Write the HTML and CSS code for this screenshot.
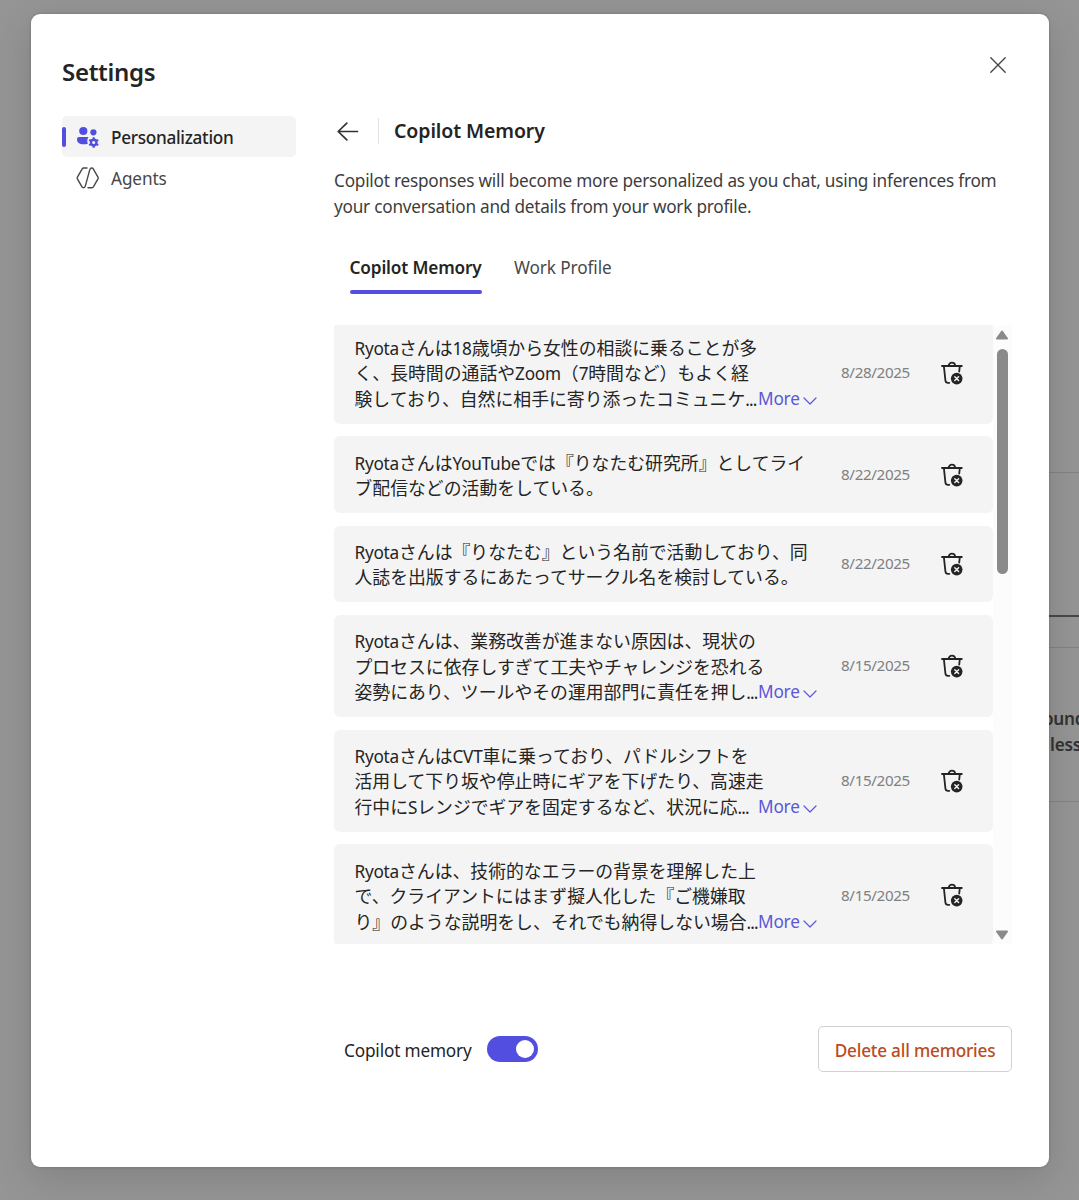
FILE: index.html
```
<!DOCTYPE html>
<html lang="en">

<head>
    <meta charset="UTF-8">
    <meta name="viewport" content="width=device-width, initial-scale=1.0">
    <title>Settings - Copilot Memory</title>
    <link rel="stylesheet" href="styles.css">
</head>

<body>
    <!-- Dimmed page behind the dialog -->
    <div class="page-behind">
        <div class="behind-box"></div>
        <div class="behind-card">
            <p>ound</p>
            <p>less</p>
        </div>
    </div>

    <!-- Shared icons -->
    <svg class="icon-defs" width="0" height="0">
        <symbol id="icon-trash" viewBox="0 0 24 26">
            <path d="M2 6h19.800M8.700 5.800a3.200 3.200 0 0 1 6.400 0M3.900 6.300l1.500 14c.2 1.700 1 2.500 2.600 2.500h1.300M19.800 6.300l-.6 5.400" fill="none" stroke="#242424" stroke-width="1.800" stroke-linecap="round" />
            <circle cx="16.700" cy="18.600" r="5.800" fill="#242424" />
            <path d="M14.800 16.700l3.800 3.800M18.600 16.700l-3.800 3.800" stroke="#f4f4f4" stroke-width="1.400" stroke-linecap="round" />
        </symbol>
        <symbol id="icon-chevron" viewBox="0 0 14 8">
            <path d="M1 1l6 6 6-6" fill="none" stroke="#5b57d8" stroke-width="1.2" stroke-linecap="round" stroke-linejoin="round" />
        </symbol>
    </svg>

    <div class="modal">
        <!-- Sidebar -->
        <div class="sidebar">
            <h1 class="title">Settings</h1>
            <div class="nav-item active">
                <span class="nav-bar"></span>
                <svg class="nav-icon" width="24" height="24" viewBox="0 0 24 24">
                    <g fill="#524fe0">
                        <circle cx="7.3" cy="6" r="4.1" />
                        <circle cx="17.4" cy="7.3" r="3.1" />
                        <path d="M3 12h9.6c-1 1.4-1.5 3-1.3 4.7.1.8.3 1.4.6 2-1.3.4-2.8.5-4.3.5C3.3 19.2 1 17.4 1 14.2 1 12.9 1.8 12 3 12z" />
                        <circle cx="17.7" cy="17.5" r="3.9" />
                        <path d="M17.7 12.3v10.4M13.2 14.9l9 5.2M13.2 20.1l9-5.2" stroke="#524fe0" stroke-width="2.2" />
                    </g>
                    <circle cx="17.7" cy="17.5" r="1.5" fill="#f4f4f4" />
                </svg>
                <span class="nav-label">Personalization</span>
            </div>
            <div class="nav-item">
                <span class="nav-bar"></span>
                <svg class="nav-icon" width="24" height="24" viewBox="0 0 24 24">
                    <path d="M11 2H7.5c-.5 0-1 .3-1.3.8L1.3 11.3c-.2.4-.2.9 0 1.3l4.5 8c.4.7 1 1.1 1.700 1.100 1 0 1.500-.600 1.800-1.600L13.800 3.600c.3-1 .9-1.600 1.900-1.600.8 0 1.300.4 1.700 1.100l4.700 8.200c.2.4.2.9 0 1.300l-4.700 8.300c-.3.500-.8.800-1.400.8H12" fill="none" stroke="#484848" stroke-width="1.4" stroke-linecap="round" />
                </svg>
                <span class="nav-label">Agents</span>
            </div>
        </div>

        <!-- Main content -->
        <div class="content">
            <div class="close-row">
                <svg width="16" height="16" viewBox="0 0 16 16">
                    <path d="M.8.8l14.4 14.4M15.2.8L.8 15.2" stroke="#424242" stroke-width="1.3" stroke-linecap="round" />
                </svg>
            </div>
            <div class="content-header">
                <svg width="22" height="20" viewBox="0 0 22 20">
                    <path d="M1.2 10.5H20.5M9.8 2.1L1.2 10.5l8.6 8.4" fill="none" stroke="#333" stroke-width="1.7" stroke-linecap="round" stroke-linejoin="round" />
                </svg>
                <h2 class="content-title">Copilot Memory</h2>
            </div>
            <p class="description">Copilot responses will become more personalized as you chat, using inferences from<br>your conversation and details from your work profile.</p>

            <div class="tabs">
                <span class="tab selected">Copilot Memory</span>
                <span class="tab">Work Profile</span>
            </div>

            <div class="memory-area">
                <div class="memory-list">
                    <div class="memory first">
                        <div class="memory-text">
                            <p class="clamped" lang="ja"><span class="latin">Ryota</span>さんは<span class="latin">18</span>歳頃から女性の相談に乗ることが多<br>く、長時間の通話や<span class="latin">Zoom</span>（<span class="latin">7</span>時間など）もよく経<br>験しており、自然に相手に寄り添ったコミュニケ<span class="dots">...</span></p>
                            <span class="more">More<svg width="14" height="8"><use href="#icon-chevron" /></svg></span>
                        </div>
                        <span class="date">8/28/2025</span>
                        <svg class="trash" width="24" height="26"><use href="#icon-trash" /></svg>
                    </div>
                    <div class="memory">
                        <div class="memory-text">
                            <p lang="ja"><span class="latin">Ryota</span>さんは<span class="latin">YouTube</span>では『りなたむ研究所』としてライ<br>ブ配信などの活動をしている。</p>
                        </div>
                        <span class="date">8/22/2025</span>
                        <svg class="trash" width="24" height="26"><use href="#icon-trash" /></svg>
                    </div>
                    <div class="memory">
                        <div class="memory-text">
                            <p lang="ja"><span class="latin">Ryota</span>さんは『りなたむ』という名前で活動しており、同<br>人誌を出版するにあたってサークル名を検討している。</p>
                        </div>
                        <span class="date">8/22/2025</span>
                        <svg class="trash" width="24" height="26"><use href="#icon-trash" /></svg>
                    </div>
                    <div class="memory">
                        <div class="memory-text">
                            <p class="clamped" lang="ja"><span class="latin">Ryota</span>さんは、業務改善が進まない原因は、現状の<br>プロセスに依存しすぎて工夫やチャレンジを恐れる<br>姿勢にあり、ツールやその運用部門に責任を押し<span class="dots">...</span></p>
                            <span class="more">More<svg width="14" height="8"><use href="#icon-chevron" /></svg></span>
                        </div>
                        <span class="date">8/15/2025</span>
                        <svg class="trash" width="24" height="26"><use href="#icon-trash" /></svg>
                    </div>
                    <div class="memory">
                        <div class="memory-text">
                            <p class="clamped" lang="ja"><span class="latin">Ryota</span>さんは<span class="latin">CVT</span>車に乗っており、パドルシフトを<br>活用して下り坂や停止時にギアを下げたり、高速走<br>行中に<span class="latin">S</span>レンジでギアを固定するなど、状況に応<span class="dots">...</span></p>
                            <span class="more">More<svg width="14" height="8"><use href="#icon-chevron" /></svg></span>
                        </div>
                        <span class="date">8/15/2025</span>
                        <svg class="trash" width="24" height="26"><use href="#icon-trash" /></svg>
                    </div>
                    <div class="memory">
                        <div class="memory-text">
                            <p class="clamped" lang="ja"><span class="latin">Ryota</span>さんは、技術的なエラーの背景を理解した上<br>で、クライアントにはまず擬人化した『ご機嫌取<br>り』のような説明をし、それでも納得しない場合<span class="dots">...</span></p>
                            <span class="more">More<svg width="14" height="8"><use href="#icon-chevron" /></svg></span>
                        </div>
                        <span class="date">8/15/2025</span>
                        <svg class="trash" width="24" height="26"><use href="#icon-trash" /></svg>
                    </div>
                </div>
                <div class="scrollbar">
                    <svg width="14" height="10" viewBox="0 0 14 10">
                        <path d="M7 1.5L12 8.5H2z" fill="#8a8a8a" stroke="#8a8a8a" stroke-width="2" stroke-linejoin="round" />
                    </svg>
                    <div class="thumb"></div>
                    <svg class="arrow-down" width="14" height="10" viewBox="0 0 14 10">
                        <path d="M7 8.5L12 1.5H2z" fill="#8a8a8a" stroke="#8a8a8a" stroke-width="2" stroke-linejoin="round" />
                    </svg>
                </div>
            </div>

            <div class="footer">
                <span class="toggle-label">Copilot memory</span>
                <span class="toggle"><span class="knob"></span></span>
                <button class="delete-all">Delete all memories</button>
            </div>
        </div>
    </div>
</body>

</html>
```
FILE: styles.css
```
* {
    box-sizing: border-box;
    margin: 0;
    padding: 0;
}

body {
    width: 1079px;
    height: 1200px;
    overflow: hidden;
    position: relative;
    background-color: #959595;
    font-family: 'Noto Sans', 'Noto Sans CJK JP', sans-serif;
    font-size: 17.2px;
    line-height: 25.5px;
    letter-spacing: -0.23px;
    color: #242424;
}

.icon-defs {
    position: absolute;
}

/* Page behind */
.page-behind {
    position: absolute;
    top: 472px;
    right: 0;
    width: 60px;
    overflow: hidden;
}

.behind-box {
    height: 145px;
    border-top: 1px solid #838383;
    border-bottom: 2px solid #484848;
}

.behind-card {
    height: 155px;
    margin-top: 30px;
    padding: 58px 0 0 24px;
    border-top: 1px solid #838383;
    border-bottom: 1px solid #838383;
    font-weight: 600;
    color: #323232;
    white-space: nowrap;
}

.behind-card p:last-child {
    padding-left: 7px;
}

/* Dialog */
.modal {
    position: relative;
    display: flex;
    width: 1018px;
    height: 1153px;
    margin: 14px 0 0 31px;
    padding: 0 37px 0 31px;
    background: #fff;
    border-radius: 9px;
    box-shadow: 0 10px 40px rgba(0, 0, 0, 0.14), 0 0 3px rgba(0, 0, 0, 0.2);
}

/* Sidebar */
.sidebar {
    width: 234px;
    margin-right: 38px;
    padding-top: 41px;
}

.title {
    font-size: 24px;
    font-weight: 600;
    line-height: 34px;
    letter-spacing: -0.3px;
    margin-bottom: 27px;
}

.nav-item {
    display: flex;
    align-items: center;
    height: 41px;
    border-radius: 5px;
    color: #484848;
}

.nav-item.active {
    background: #f4f4f4;
    color: #242424;
}

.nav-bar {
    width: 4px;
    height: 20px;
    border-radius: 2px;
}

.active .nav-bar {
    background: #524fe0;
}

.nav-icon {
    margin: 0 11px 0 10px;
}

.nav-label {
    padding-top: 2px;
    letter-spacing: -0.1px;
}

.active .nav-label {
    padding-top: 3px;
    font-weight: 500;
    letter-spacing: -0.3px;
}

/* Content */
.content {
    width: 678px;
}

.close-row {
    display: flex;
    justify-content: flex-end;
    padding: 43px 6.5px 0 0;
    height: 103px;
}

.content-header {
    display: flex;
    align-items: center;
    height: 28px;
    padding-left: 3px;
}

.content-title {
    height: 26px;
    margin-left: 19px;
    padding-left: 15px;
    border-left: 1px solid #e3e3e3;
    font-size: 19.5px;
    font-weight: 600;
    line-height: 25px;
    letter-spacing: -0.1px;
}

.description {
    margin-top: 23px;
    color: #3d3d3d;
    white-space: nowrap;
}

.tabs {
    display: flex;
    gap: 32.5px;
    margin: 35.5px 0 31.5px;
    padding-left: 15.5px;
    color: #484848;
    letter-spacing: -0.1px;
}

.tab {
    height: 39px;
    border-bottom: 4px solid transparent;
}

.tab.selected {
    position: relative;
    color: #242424;
    font-weight: 600;
    letter-spacing: -0.15px;
}

.tab.selected::after {
    content: "";
    position: absolute;
    left: 0;
    right: 0;
    bottom: -4px;
    height: 4px;
    border-radius: 2px;
    background: #524fe0;
}

/* Memory list */
.memory-area {
    display: flex;
    height: 619px;
    overflow: hidden;
}

.memory-list {
    width: 659px;
}

.memory {
    display: flex;
    align-items: center;
    margin-bottom: 12.75px;
    padding: 12.75px 20.5px;
    background: #f4f4f4;
    border-radius: 6px;
}

/* list is scrolled down a little */
.memory.first {
    margin-top: -3.5px;
}

.memory-text {
    display: flex;
    flex: 0 0 463px;
    align-items: flex-end;
    position: relative;
    top: 0.6px;
    font-family: 'Noto Sans CJK JP', sans-serif;
    font-size: 17.85px;
    letter-spacing: 0;
    white-space: nowrap;
}

.clamped {
    flex: 0 0 403.5px;
    min-width: 0;
    width: 403.5px;
}

.latin,
.dots {
    font-family: 'Noto Sans', sans-serif;
    font-size: 17.2px;
    line-height: 1;
    letter-spacing: -0.25px;
}

.dots {
    letter-spacing: -0.9px;
}

.more {
    font-family: 'Noto Sans', sans-serif;
    font-size: 17.2px;
    letter-spacing: -0.2px;
    color: #5b57d8;
}

.more svg {
    margin-left: 3px;
}

.date {
    flex: 0 0 70px;
    margin-left: 23.5px;
    font-size: 15.2px;
    letter-spacing: -0.35px;
    color: #808080;
    white-space: nowrap;
}

.trash {
    flex-shrink: 0;
    margin-left: 29px;
}

/* Scrollbar */
.scrollbar {
    display: flex;
    flex-direction: column;
    align-items: center;
    width: 19px;
    padding: 5px 1px 4px 0;
    background: #fcfcfc;
}

.thumb {
    width: 11px;
    height: 225px;
    margin-top: 8.5px;
    border-radius: 6px;
    background: #8a8a8a;
}

.arrow-down {
    margin-top: auto;
}

/* Footer */
.footer {
    display: flex;
    align-items: center;
    margin-top: 82px;
    padding-left: 10px;
}

.toggle-label {
    padding-top: 3px;
    letter-spacing: -0.16px;
}

.toggle {
    display: flex;
    justify-content: flex-end;
    align-items: center;
    width: 51px;
    height: 26px;
    margin-left: 15.5px;
    padding-right: 4px;
    border-radius: 13px;
    background: #524fe0;
}

.knob {
    width: 18px;
    height: 18px;
    border-radius: 50%;
    background: #fff;
}

.delete-all {
    width: 194px;
    height: 46px;
    margin-left: auto;
    padding-top: 2px;
    border: 1px solid #d1d1d1;
    border-radius: 5px;
    background: #fff;
    color: #bc4b22;
    font-family: inherit;
    font-size: 17.2px;
    font-weight: 500;
    letter-spacing: -0.2px;
    white-space: nowrap;
}
```
